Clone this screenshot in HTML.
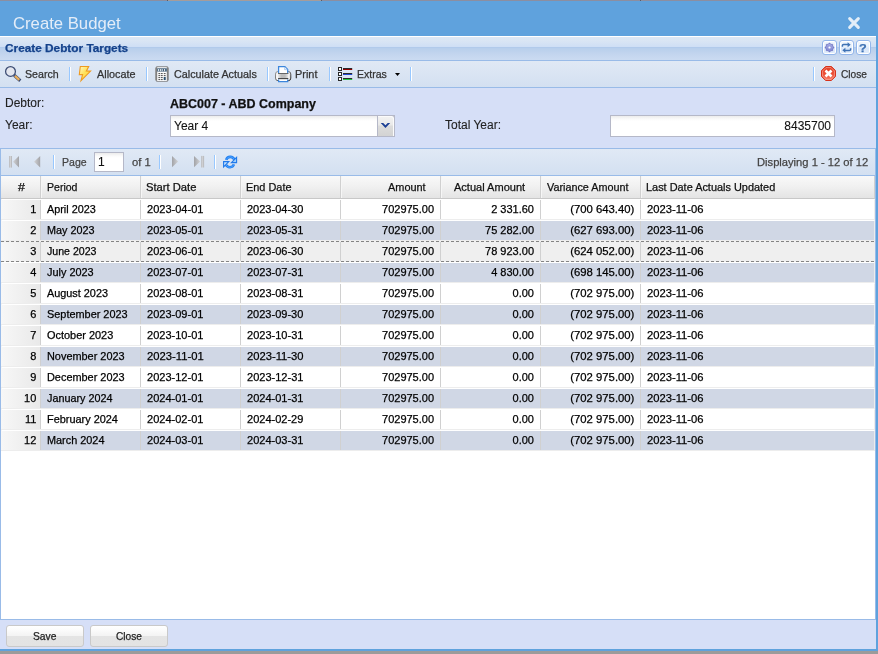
<!DOCTYPE html>
<html><head><meta charset="utf-8"><title>Create Budget</title>
<style>
*{box-sizing:border-box;margin:0;padding:0}
html,body{width:878px;height:654px;overflow:hidden;background:#fff}
body{font-family:"Liberation Sans",sans-serif;font-size:11px;color:#222;position:relative}
.abs{position:absolute}
.t{position:absolute;white-space:nowrap;transform-origin:0 0;-webkit-text-stroke:0.25px currentColor}
#win{left:0;top:0;width:878px;height:651px;background:#5fa2dd}
#topline{left:0;top:0;width:878px;height:1px;background:#8c8ea0}
#botshadow{left:0;top:651px;width:878px;height:3px;background:#9b9b9b}
#phdr{left:0;top:36px;width:876px;height:24px;border-top:1px solid #fff;
 background:linear-gradient(#dce7f5 0,#d9e5f4 4px,#cfdff5 9.5px,#adc7ea 10px,#b8cfec 11.5px,#c3d5ee 17px,#cbdbf1 23px)}
#tb{left:0;top:60px;width:876px;height:28px;border-top:1px solid #99bbe8;border-bottom:1px solid #99bbe8;
 background:linear-gradient(#e0e9f5,#d3e0f1)}
.sep{position:absolute;width:2px;height:14px;border-left:1px solid #98c8ff;border-right:1px solid #fff}
#form{left:0;top:88px;width:876px;height:60px;background:#d6dff7}
.fld{position:absolute;top:115px;height:22px;border:1px solid #b5b8c8;background:linear-gradient(#ececec 0,#fafafa 3px,#fff 5px)}
#pg{left:0;top:148px;width:876px;height:27px;border:1px solid #99bbe8;border-bottom:0;
 background:linear-gradient(#e0e9f5,#d3e0f1)}
#grid{left:0;top:175px;width:876px;height:445px;background:#fff;border:1px solid #99bbe8}
#ghdr{left:1px;top:176px;width:874px;height:23px;border-bottom:1px solid #c8c8c8;border-right:1px solid #d0d0d0;
 background:linear-gradient(#f9f9f9 0,#f1f1f1 10px,#e4e4e4 22px)}
.hs{position:absolute;top:176px;width:2px;height:22px;border-left:1px solid #d0d0d0;border-right:1px solid #f6f6f6}
.row{position:absolute;left:1px;width:874px;height:21px;border:1px solid #ededed;border-top-color:#fff;background:#fff}
.row.alt{background:#d0d7e5}
.row.over{background:#efefef;border-color:transparent}
.row.over:before,.row.over:after{content:"";position:absolute;left:-1px;width:874px;height:1px;top:-1px;
 background:repeating-linear-gradient(90deg,#848484 0,#848484 3px,transparent 3px,transparent 5px)}
.row.over:after{top:19px}
.num{position:absolute;left:-1px;top:0;bottom:0;width:39px;background:linear-gradient(90deg,#f7f7f7,#e9e9e9)}
.ln{position:absolute;left:0;top:0;right:0;bottom:0;background-repeat:no-repeat;background-size:1px 100%;background-image:linear-gradient(#d0d0d0,#d0d0d0),linear-gradient(#d0d0d0,#d0d0d0),linear-gradient(#d0d0d0,#d0d0d0),linear-gradient(#d0d0d0,#d0d0d0),linear-gradient(#d0d0d0,#d0d0d0),linear-gradient(#d0d0d0,#d0d0d0),linear-gradient(#d0d0d0,#d0d0d0);background-position:38px 0,138px 0,238px 0,338px 0,438px 0,538px 0,638px 0}
#foot{left:0;top:620px;width:876px;height:29px;background:#d6dff7}
.btn{position:absolute;top:625px;height:22px;width:78px;border:1px solid #c9c9c9;border-radius:3px;
 background:linear-gradient(#fff 0,#fbfbfb 4px,#f3f3f3 10px,#e4e4e4 10px,#e3e3e3 20px)}
.tool{position:absolute;top:40px;width:15px;height:15px;border:1px solid #93b6ea;border-radius:3px;box-shadow:inset 0 0 0 1px #fff;background:linear-gradient(#f2f7fe,#e8f1fc 6px,#d9e7fa 7px,#e0ecfb)}
</style></head><body>
<div class="abs" id="win"></div>
<div class="abs" id="topline"></div><div class="abs" style="left:167px;top:0;width:154px;height:1px;background:#a69c9a"></div><div class="abs" style="left:167px;top:0;width:1px;height:1px;background:#5c5c64"></div><div class="abs" style="left:321px;top:0;width:1px;height:1px;background:#5c5c64"></div><div class="abs" style="left:640px;top:0;width:1px;height:1px;background:#5c5c64"></div>
<div class="abs" id="botshadow"></div>
<svg class="abs" style="left:846px;top:15px" width="16" height="16" viewBox="0 0 16 16"><path d="M3.7 3.7 L12.3 12.3 M12.3 3.7 L3.7 12.3" stroke="#e4eef8" stroke-width="3.1" stroke-linecap="round" fill="none"/></svg>

<div class="abs" id="phdr"></div>
<div class="tool" style="left:822px"></div>
<div class="tool" style="left:839px"></div>
<div class="tool" style="left:856px"></div>
<div class="abs" id="tb"></div>
<div class="sep" style="left:69px;top:67px"></div>
<div class="sep" style="left:146px;top:67px"></div>
<div class="sep" style="left:267px;top:67px"></div>
<div class="sep" style="left:329px;top:67px"></div>
<div class="sep" style="left:410px;top:67px"></div>
<div class="sep" style="left:813px;top:67px"></div>
<svg width="0" height="0" style="position:absolute"><defs>
<linearGradient id="gBolt" x1="0" y1="0" x2="1" y2="1"><stop offset="0" stop-color="#fff9c8"/><stop offset=".45" stop-color="#ffe25a"/><stop offset="1" stop-color="#ffd23a"/></linearGradient>
<linearGradient id="gOct" x1="0" y1="0" x2="0" y2="1"><stop offset="0" stop-color="#e23c22"/><stop offset=".55" stop-color="#ec4f36"/><stop offset="1" stop-color="#f7806c"/></linearGradient>
<linearGradient id="gTri" x1="0" y1="0" x2="1" y2="0"><stop offset="0" stop-color="#d2d3d6"/><stop offset="1" stop-color="#a2a3a7"/></linearGradient>
<linearGradient id="gTriR" x1="0" y1="0" x2="1" y2="0"><stop offset="0" stop-color="#a2a3a7"/><stop offset="1" stop-color="#d2d3d6"/></linearGradient>
<linearGradient id="gBar" x1="0" y1="0" x2="1" y2="0"><stop offset="0" stop-color="#b8b9bc"/><stop offset=".5" stop-color="#d0d1d4"/><stop offset="1" stop-color="#b0b1b4"/></linearGradient>
<linearGradient id="gPrn" x1="0" y1="0" x2="1" y2="0"><stop offset="0" stop-color="#d0d0d0"/><stop offset=".08" stop-color="#fbfbfb"/><stop offset=".16" stop-color="#f4f4f4"/><stop offset=".24" stop-color="#d4d4d4"/><stop offset=".76" stop-color="#d4d4d4"/><stop offset=".84" stop-color="#f4f4f4"/><stop offset=".92" stop-color="#e8e8e8"/><stop offset="1" stop-color="#a0a0a0"/></linearGradient>
<linearGradient id="gPrnS" x1="0" y1="0" x2="1" y2="1"><stop offset="0" stop-color="#9a9a9a"/><stop offset=".5" stop-color="#6c6c6c"/><stop offset="1" stop-color="#262626"/></linearGradient>
<linearGradient id="gPrnP" x1="0" y1="0" x2="1" y2="0"><stop offset="0" stop-color="#e2e2e2"/><stop offset=".3" stop-color="#bcbcbc"/><stop offset=".7" stop-color="#bcbcbc"/><stop offset="1" stop-color="#e2e2e2"/></linearGradient>
<linearGradient id="gRef" x1="0" y1="0" x2="0" y2="1"><stop offset="0" stop-color="#1f7ff0"/><stop offset=".5" stop-color="#55a9ff"/><stop offset="1" stop-color="#1a72e0"/></linearGradient>
<linearGradient id="gGear" x1="0" y1="0" x2="0" y2="1"><stop offset="0" stop-color="#a9aee8"/><stop offset="1" stop-color="#7f85d0"/></linearGradient>
</defs></svg><svg class="abs" style="left:4px;top:65px" width="18" height="18" viewBox="0 0 18 18" ><circle cx="6.5" cy="6.4" r="4.9" fill="#e3e6ee" stroke="#3b4b72" stroke-width="1.25"/><path d="M10.2 10.2 L16.3 15.7" stroke="#3b4b72" stroke-width="3.2" stroke-linecap="butt"/><path d="M10.9 10.8 L15.3 14.8" stroke="#e9ae5c" stroke-width="2.3" stroke-linecap="butt"/></svg><svg class="abs" style="left:78px;top:65px" width="14" height="18" viewBox="0 0 14 18" ><path d="M2.3 1.5 L10.7 1.5 L8.4 5.9 L12.6 6.1 L3 15.7 L4.6 9.6 L1.3 9.6 Z" fill="url(#gBolt)" stroke="#ef9a20" stroke-width="1.1" stroke-linejoin="miter"/></svg><svg class="abs" style="left:155px;top:66px" width="14" height="16" viewBox="0 0 14 16" ><rect x="0.2" y="1.5" width="13.6" height="13" fill="#8a8a8a"/><rect x="1.3" y="0.3" width="11.4" height="15.4" fill="#7c7c7c"/><rect x="2.2" y="1.2" width="9.6" height="13.8" fill="#fff"/><rect x="2.2" y="2.3" width="9.6" height="3.3" fill="#3f5d78"/><path d="M3.6 3v2.2M5.4 3v2.2M7.2 3v2.2M9.6 3v2.2" stroke="#fff" stroke-width=".9"/><rect x="3.4" y="7.1" width="1.8" height="1" fill="#4a4a4a"/><rect x="3.4" y="9.1" width="1.8" height="1" fill="#4a4a4a"/><rect x="3.4" y="11.1" width="1.8" height="1" fill="#4a4a4a"/><rect x="3.4" y="13.1" width="1.8" height="1" fill="#4a4a4a"/><rect x="5.9" y="7.1" width="1.8" height="1" fill="#4a4a4a"/><rect x="5.9" y="9.1" width="1.8" height="1" fill="#4a4a4a"/><rect x="5.9" y="11.1" width="1.8" height="1" fill="#4a4a4a"/><rect x="5.9" y="13.1" width="1.8" height="1" fill="#4a4a4a"/><rect x="8.8" y="7.1" width="1.8" height="1" fill="#4a4a4a"/><rect x="8.8" y="9.1" width="1.8" height="1" fill="#4a4a4a"/><rect x="8.7" y="10.9" width="2" height="3.2" fill="#2b4f6d"/></svg><svg class="abs" style="left:275px;top:65px" width="17" height="18" viewBox="0 0 17 18" ><rect x="0.5" y="6.5" width="15.3" height="9.2" rx="2.6" fill="url(#gPrn)" stroke="url(#gPrnS)" stroke-width="1"/><path d="M3.6 8.2 V1.6 H9.9 L12.7 4.4 V8.2" fill="#fff" stroke="#3c86dc" stroke-width="1.25"/><path d="M9.6 1.9 L9.6 4.7 L12.4 4.7" fill="#e6eef9" stroke="#8ab6ea" stroke-width=".6"/><rect x="3" y="8" width="10.4" height="1" fill="#666"/><rect x="3.6" y="9" width="9.2" height="4" fill="url(#gPrnP)"/><rect x="3" y="13" width="10.4" height="1.2" rx=".5" fill="#484848"/><path d="M3.6 14.4 V16.7 H12.7 V14.4" fill="#fff" stroke="#3c86dc" stroke-width="1.25"/></svg><svg class="abs" style="left:338px;top:67px" width="15" height="14" viewBox="0 0 15 14" ><rect x="0.5" y="0.5" width="3" height="3" fill="#fff" stroke="#2a2a2a" stroke-width="1"/><rect x="0.5" y="5.5" width="3" height="3" fill="#fff" stroke="#2a2a2a" stroke-width="1"/><rect x="0.5" y="10.5" width="3" height="3" fill="#fff" stroke="#2a2a2a" stroke-width="1"/><rect x="5" y="1" width="9.2" height="1" fill="#2a2a2a"/><rect x="5" y="2" width="9.2" height="1" fill="#8e0000"/><rect x="5" y="6" width="9.2" height="1" fill="#2a2a2a"/><rect x="5" y="7" width="9.2" height="1" fill="#2046d0"/><rect x="5" y="11" width="9.2" height="1" fill="#2a2a2a"/><rect x="5" y="12" width="9.2" height="1" fill="#1fc43c"/></svg><svg class="abs" style="left:394px;top:72px" width="8" height="5" viewBox="0 0 8 5" ><path d="M1 1 H6 L3.5 4 Z" fill="#000"/></svg><svg class="abs" style="left:820px;top:65px" width="17" height="17" viewBox="0 0 17 17" ><path d="M5.6 1.5 H11.4 L15.5 5.6 V11.4 L11.4 15.5 H5.6 L1.5 11.4 V5.6 Z" fill="url(#gOct)" stroke="#d6311b" stroke-width="1"/><path d="M6 2.6 H11 L14.4 6 V11 L11 14.4 H6 L2.6 11 V6 Z" fill="none" stroke="#f7a898" stroke-width=".8" opacity=".85"/><path d="M5.5 5.5 L11.5 11.5 M11.5 5.5 L5.5 11.5" stroke="#fff" stroke-width="2.6"/></svg><svg class="abs" style="left:822px;top:40px" width="15" height="15" viewBox="0 0 15 15" ><polygon points="11.78,7.08 11.78,7.92 10.85,8.52 10.59,9.15 10.82,10.23 10.23,10.82 9.15,10.59 8.52,10.85 7.92,11.78 7.08,11.78 6.48,10.85 5.85,10.59 4.77,10.82 4.18,10.23 4.41,9.15 4.15,8.52 3.22,7.92 3.22,7.08 4.15,6.48 4.41,5.85 4.18,4.77 4.77,4.18 5.85,4.41 6.48,4.15 7.08,3.22 7.92,3.22 8.52,4.15 9.15,4.41 10.23,4.18 10.82,4.77 10.59,5.85 10.85,6.48" fill="url(#gGear)" stroke="#6368ba" stroke-width=".8" stroke-linejoin="round"/><circle cx="7.5" cy="7.5" r="1.7" fill="#c6caf0" stroke="#8187d2" stroke-width=".5"/><circle cx="7.5" cy="7.5" r="0.8" fill="#fff"/></svg><svg class="abs" style="left:839px;top:40px" width="15" height="15" viewBox="0 0 15 15" ><path d="M3.4 6.7 V5.6 Q3.4 4.6 4.6 4.6 H9.2" fill="none" stroke="#3f72b4" stroke-width="1.5"/><path d="M8.6 2.2 L11.7 4.7 L8.6 7.2 Z" fill="#3f72b4"/><path d="M11.6 8.3 V9.4 Q11.6 10.4 10.4 10.4 H5.8" fill="none" stroke="#3f72b4" stroke-width="1.5"/><path d="M6.4 7.8 L3.3 10.3 L6.4 12.8 Z" fill="#3f72b4"/></svg>
<div class="abs" id="form"></div>
<div class="fld" style="left:170px;width:225px"></div>
<div class="abs" style="left:377px;top:115px;width:18px;height:22px;border:1px solid #b5b8c8;border-radius:0 3px 0 0;box-shadow:inset -1px 1px 0 #fbfbfb;background:linear-gradient(#f3f3f3 0,#e9e9e9 9px,#dcdcdc 10px,#d3d3d3 20px)"></div>
<svg class="abs" style="left:380px;top:122px" width="11" height="7" viewBox="0 0 11 7"><path d="M0.7 1 L3.2 1 L5.45 3.3 L7.7 1 L10.2 1 L5.45 6 Z" fill="#1c3f94"/></svg>
<div class="fld" style="left:610px;width:225px"></div>
<div class="abs" id="pg"></div>
<div class="sep" style="left:53px;top:155px"></div>
<div class="sep" style="left:159px;top:155px"></div>
<div class="sep" style="left:214px;top:155px"></div>
<div class="abs" style="left:94px;top:152px;width:30px;height:20px;border:1px solid #b5b8c8;background:linear-gradient(#ececec 0,#fafafa 3px,#fff 5px)"></div>
<svg class="abs" style="left:8px;top:155px" width="13" height="14" viewBox="0 0 13 14" ><rect x="1" y="1" width="3" height="11.6" fill="url(#gBar)"/><path d="M5 6.8 L11 1.1 V12.5 Z" fill="url(#gTri)"/></svg><svg class="abs" style="left:33px;top:155px" width="9" height="14" viewBox="0 0 9 14" ><path d="M1 6.8 L7.2 1.1 V12.5 Z" fill="url(#gTri)"/></svg><svg class="abs" style="left:171px;top:155px" width="9" height="14" viewBox="0 0 9 14" ><path d="M7.2 6.6 L1 0.9 V12.3 Z" fill="url(#gTriR)"/></svg><svg class="abs" style="left:193px;top:155px" width="13" height="14" viewBox="0 0 13 14" ><rect x="8.1" y="0.9" width="3" height="11.6" fill="url(#gBar)"/><path d="M7.2 6.6 L1 0.9 V12.3 Z" fill="url(#gTriR)"/></svg><svg class="abs" style="left:222px;top:154px" width="16" height="16" viewBox="0 0 16 16" ><path d="M4.2 5.9 A4.3 4.3 0 0 1 12.3 5.6" fill="none" stroke="#1f7ef0" stroke-width="2.6"/><path d="M4.3 5.7 A4.2 4.2 0 0 1 12.2 5.4" fill="none" stroke="#4da2ff" stroke-width="1"/><path d="M14.6 3.4 V8.6 H9.4 Z" fill="#9ccfff" stroke="#2079ea" stroke-width="1.1" stroke-linejoin="miter"/><path d="M11.9 10.4 A4.3 4.3 0 0 1 4 10.8" fill="none" stroke="#1f7ef0" stroke-width="2.6"/><path d="M11.8 10.6 A4.2 4.2 0 0 1 4.1 11" fill="none" stroke="#4da2ff" stroke-width="1"/><path d="M1.6 12.8 V7.6 H6.8 Z" fill="#c4e2ff" stroke="#2079ea" stroke-width="1.1" stroke-linejoin="miter"/></svg>
<div class="abs" id="grid"></div>
<div class="abs" id="ghdr"></div>
<div class="row" style="top:199px"><div class="num"></div><div class="ln"></div></div>
<div class="row alt" style="top:220px"><div class="num"></div><div class="ln"></div></div>
<div class="row over" style="top:241px"><div class="num"></div><div class="ln"></div></div>
<div class="row alt" style="top:262px"><div class="num"></div><div class="ln"></div></div>
<div class="row" style="top:283px"><div class="num"></div><div class="ln"></div></div>
<div class="row alt" style="top:304px"><div class="num"></div><div class="ln"></div></div>
<div class="row" style="top:325px"><div class="num"></div><div class="ln"></div></div>
<div class="row alt" style="top:346px"><div class="num"></div><div class="ln"></div></div>
<div class="row" style="top:367px"><div class="num"></div><div class="ln"></div></div>
<div class="row alt" style="top:388px"><div class="num"></div><div class="ln"></div></div>
<div class="row" style="top:409px"><div class="num"></div><div class="ln"></div></div>
<div class="row alt" style="top:430px"><div class="num"></div><div class="ln"></div></div>
<div class="hs" style="left:40px"></div><div class="hs" style="left:140px"></div><div class="hs" style="left:240px"></div><div class="hs" style="left:340px"></div><div class="hs" style="left:440px"></div><div class="hs" style="left:540px"></div><div class="hs" style="left:640px"></div>

<div class="abs" id="foot"></div>
<div class="btn" style="left:6px"></div>
<div class="btn" style="left:90px"></div>
<div id="txt" style="position:absolute;left:0;top:0;width:878px;height:654px;will-change:transform">
<div class="t" id="t0" style="top:13.00px;font-size:17px;line-height:21px;color:#e4edf8;left:13.00px;transform:scaleX(0.9817);transform-origin:0 0;-webkit-text-stroke:0;">Create Budget</div>
<div class="t" id="t1" style="top:41.00px;font-size:11px;line-height:15px;color:#15428b;font-weight:bold;left:4.58px;transform:scaleX(1.0739);transform-origin:0 0;">Create Debtor Targets</div>
<div class="t" id="t2" style="top:67.00px;font-size:11px;line-height:15px;color:#333;left:25.01px;transform:scaleX(0.9648);transform-origin:0 0;">Search</div>
<div class="t" id="t3" style="top:67.00px;font-size:11px;line-height:15px;color:#333;left:96.84px;transform:scaleX(0.9857);transform-origin:0 0;">Allocate</div>
<div class="t" id="t4" style="top:67.00px;font-size:11px;line-height:15px;color:#333;left:173.94px;transform:scaleX(0.9814);transform-origin:0 0;">Calculate Actuals</div>
<div class="t" id="t5" style="top:67.00px;font-size:11px;line-height:15px;color:#333;left:294.91px;transform:scaleX(0.9941);transform-origin:0 0;">Print</div>
<div class="t" id="t6" style="top:67.00px;font-size:11px;line-height:15px;color:#333;left:356.94px;transform:scaleX(0.9576);transform-origin:0 0;">Extras</div>
<div class="t" id="t7" style="top:67.00px;font-size:11px;line-height:15px;color:#333;left:841.21px;transform:scaleX(0.9241);transform-origin:0 0;">Close</div>
<div class="t" id="t8" style="top:95.00px;font-size:12px;line-height:16px;color:#222;left:5px;-webkit-text-stroke:0.1px;">Debtor:</div>
<div class="t" id="t9" style="top:117.00px;font-size:12px;line-height:16px;color:#222;left:5px;-webkit-text-stroke:0.1px;">Year:</div>
<div class="t" id="t10" style="top:96.00px;font-size:12px;line-height:16px;color:#111;font-weight:bold;left:169.62px;transform:scaleX(1.0403);transform-origin:0 0;">ABC007 - ABD Company</div>
<div class="t" id="t11" style="top:118.00px;font-size:12px;line-height:16px;color:#111;left:174px;-webkit-text-stroke:0.1px;">Year 4</div>
<div class="t" id="t12" style="top:117.00px;font-size:12px;line-height:16px;color:#222;left:445px;-webkit-text-stroke:0.1px;">Total Year:</div>
<div class="t" id="t13" style="top:118.00px;font-size:12px;line-height:16px;color:#111;right:47.00px;-webkit-text-stroke:0.1px;">8435700</div>
<div class="t" id="t14" style="top:155.00px;font-size:11px;line-height:15px;color:#444;left:61.74px;transform:scaleX(0.9574);transform-origin:0 0;">Page</div>
<div class="t" id="t15" style="top:154.00px;font-size:12px;line-height:16px;color:#111;left:98px;-webkit-text-stroke:0.1px;">1</div>
<div class="t" id="t16" style="top:155.00px;font-size:11px;line-height:15px;color:#444;left:131.82px;transform:scaleX(1.0183);transform-origin:0 0;">of 1</div>
<div class="t" id="t17" style="top:155.00px;font-size:11px;line-height:15px;color:#444;left:757.27px;transform:scaleX(1.0153);transform-origin:0 0;">Displaying 1 - 12 of 12</div>
<div class="t" id="t18" style="top:180.00px;font-size:11px;line-height:15px;color:#111;left:18px;transform:scaleX(1.13);">#</div>
<div class="t" id="t19" style="top:180.00px;font-size:11px;line-height:15px;color:#111;left:47.14px;transform:scaleX(0.9574);transform-origin:0 0;">Period</div>
<div class="t" id="t20" style="top:180.00px;font-size:11px;line-height:15px;color:#111;left:146.37px;transform:scaleX(1.0173);transform-origin:0 0;">Start Date</div>
<div class="t" id="t21" style="top:180.00px;font-size:11px;line-height:15px;color:#111;left:246.30px;transform:scaleX(0.9926);transform-origin:0 0;">End Date</div>
<div class="t" id="t22" style="top:180.00px;font-size:11px;line-height:15px;color:#111;left:387.62px;transform:scaleX(0.9934);transform-origin:0 0;">Amount</div>
<div class="t" id="t23" style="top:180.00px;font-size:11px;line-height:15px;color:#111;left:453.83px;transform:scaleX(1.0024);transform-origin:0 0;">Actual Amount</div>
<div class="t" id="t24" style="top:180.00px;font-size:11px;line-height:15px;color:#111;left:547.46px;transform:scaleX(0.9832);transform-origin:0 0;">Variance Amount</div>
<div class="t" id="t25" style="top:180.00px;font-size:11px;line-height:15px;color:#111;left:646.30px;transform:scaleX(0.9919);transform-origin:0 0;">Last Date Actuals Updated</div>
<div class="t" id="t26" style="top:202.00px;font-size:11px;line-height:15px;color:#000;right:841.70px;">1</div>
<div class="t" id="t27" style="top:202.00px;font-size:11px;line-height:15px;color:#000;left:47.08px;transform:scaleX(0.9855);transform-origin:0 0;">April 2023</div>
<div class="t" id="t28" style="top:202.00px;font-size:11px;line-height:15px;color:#000;left:147px;transform:scaleX(1.0029);transform-origin:0 0;">2023-04-01</div>
<div class="t" id="t29" style="top:202.00px;font-size:11px;line-height:15px;color:#000;left:247px;transform:scaleX(1.0005);transform-origin:0 0;">2023-04-30</div>
<div class="t" id="t30" style="top:202.00px;font-size:11px;line-height:15px;color:#000;right:443.97px;">702975.00</div>
<div class="t" id="t31" style="top:202.00px;font-size:11px;line-height:15px;color:#000;right:344.00px;">2 331.60</div>
<div class="t" id="t32" style="top:202.00px;font-size:11px;line-height:15px;color:#000;right:243.25px;transform:scaleX(1.0291);transform-origin:100% 0;">(700 643.40)</div>
<div class="t" id="t33" style="top:202.00px;font-size:11px;line-height:15px;color:#000;left:647px;transform:scaleX(1.0195);transform-origin:0 0;">2023-11-06</div>
<div class="t" id="t34" style="top:223.00px;font-size:11px;line-height:15px;color:#000;right:841.70px;">2</div>
<div class="t" id="t35" style="top:223.00px;font-size:11px;line-height:15px;color:#000;left:47.08px;transform:scaleX(0.9833);transform-origin:0 0;">May 2023</div>
<div class="t" id="t36" style="top:223.00px;font-size:11px;line-height:15px;color:#000;left:147px;transform:scaleX(1.0029);transform-origin:0 0;">2023-05-01</div>
<div class="t" id="t37" style="top:223.00px;font-size:11px;line-height:15px;color:#000;left:247px;transform:scaleX(1.0029);transform-origin:0 0;">2023-05-31</div>
<div class="t" id="t38" style="top:223.00px;font-size:11px;line-height:15px;color:#000;right:443.97px;">702975.00</div>
<div class="t" id="t39" style="top:223.00px;font-size:11px;line-height:15px;color:#000;right:344.00px;">75 282.00</div>
<div class="t" id="t40" style="top:223.00px;font-size:11px;line-height:15px;color:#000;right:243.25px;transform:scaleX(1.0291);transform-origin:100% 0;">(627 693.00)</div>
<div class="t" id="t41" style="top:223.00px;font-size:11px;line-height:15px;color:#000;left:647px;transform:scaleX(1.0195);transform-origin:0 0;">2023-11-06</div>
<div class="t" id="t42" style="top:244.00px;font-size:11px;line-height:15px;color:#000;right:841.70px;">3</div>
<div class="t" id="t43" style="top:244.00px;font-size:11px;line-height:15px;color:#000;left:47.08px;transform:scaleX(0.9634);transform-origin:0 0;">June 2023</div>
<div class="t" id="t44" style="top:244.00px;font-size:11px;line-height:15px;color:#000;left:147px;transform:scaleX(1.0029);transform-origin:0 0;">2023-06-01</div>
<div class="t" id="t45" style="top:244.00px;font-size:11px;line-height:15px;color:#000;left:247px;transform:scaleX(1.0005);transform-origin:0 0;">2023-06-30</div>
<div class="t" id="t46" style="top:244.00px;font-size:11px;line-height:15px;color:#000;right:443.97px;">702975.00</div>
<div class="t" id="t47" style="top:244.00px;font-size:11px;line-height:15px;color:#000;right:344.00px;">78 923.00</div>
<div class="t" id="t48" style="top:244.00px;font-size:11px;line-height:15px;color:#000;right:243.25px;transform:scaleX(1.0291);transform-origin:100% 0;">(624 052.00)</div>
<div class="t" id="t49" style="top:244.00px;font-size:11px;line-height:15px;color:#000;left:647px;transform:scaleX(1.0195);transform-origin:0 0;">2023-11-06</div>
<div class="t" id="t50" style="top:265.00px;font-size:11px;line-height:15px;color:#000;right:841.70px;">4</div>
<div class="t" id="t51" style="top:265.00px;font-size:11px;line-height:15px;color:#000;left:47.08px;transform:scaleX(0.9905);transform-origin:0 0;">July 2023</div>
<div class="t" id="t52" style="top:265.00px;font-size:11px;line-height:15px;color:#000;left:147px;transform:scaleX(1.0029);transform-origin:0 0;">2023-07-01</div>
<div class="t" id="t53" style="top:265.00px;font-size:11px;line-height:15px;color:#000;left:247px;transform:scaleX(1.0029);transform-origin:0 0;">2023-07-31</div>
<div class="t" id="t54" style="top:265.00px;font-size:11px;line-height:15px;color:#000;right:443.97px;">702975.00</div>
<div class="t" id="t55" style="top:265.00px;font-size:11px;line-height:15px;color:#000;right:344.00px;">4 830.00</div>
<div class="t" id="t56" style="top:265.00px;font-size:11px;line-height:15px;color:#000;right:243.25px;transform:scaleX(1.0291);transform-origin:100% 0;">(698 145.00)</div>
<div class="t" id="t57" style="top:265.00px;font-size:11px;line-height:15px;color:#000;left:647px;transform:scaleX(1.0195);transform-origin:0 0;">2023-11-06</div>
<div class="t" id="t58" style="top:286.00px;font-size:11px;line-height:15px;color:#000;right:841.70px;">5</div>
<div class="t" id="t59" style="top:286.00px;font-size:11px;line-height:15px;color:#000;left:47.08px;transform:scaleX(0.9871);transform-origin:0 0;">August 2023</div>
<div class="t" id="t60" style="top:286.00px;font-size:11px;line-height:15px;color:#000;left:147px;transform:scaleX(1.0029);transform-origin:0 0;">2023-08-01</div>
<div class="t" id="t61" style="top:286.00px;font-size:11px;line-height:15px;color:#000;left:247px;transform:scaleX(1.0029);transform-origin:0 0;">2023-08-31</div>
<div class="t" id="t62" style="top:286.00px;font-size:11px;line-height:15px;color:#000;right:443.97px;">702975.00</div>
<div class="t" id="t63" style="top:286.00px;font-size:11px;line-height:15px;color:#000;right:344.00px;">0.00</div>
<div class="t" id="t64" style="top:286.00px;font-size:11px;line-height:15px;color:#000;right:243.25px;transform:scaleX(1.0290);transform-origin:100% 0;">(702 975.00)</div>
<div class="t" id="t65" style="top:286.00px;font-size:11px;line-height:15px;color:#000;left:647px;transform:scaleX(1.0195);transform-origin:0 0;">2023-11-06</div>
<div class="t" id="t66" style="top:307.00px;font-size:11px;line-height:15px;color:#000;right:841.70px;">6</div>
<div class="t" id="t67" style="top:307.00px;font-size:11px;line-height:15px;color:#000;left:47.08px;transform:scaleX(0.9913);transform-origin:0 0;">September 2023</div>
<div class="t" id="t68" style="top:307.00px;font-size:11px;line-height:15px;color:#000;left:147px;transform:scaleX(1.0029);transform-origin:0 0;">2023-09-01</div>
<div class="t" id="t69" style="top:307.00px;font-size:11px;line-height:15px;color:#000;left:247px;transform:scaleX(1.0005);transform-origin:0 0;">2023-09-30</div>
<div class="t" id="t70" style="top:307.00px;font-size:11px;line-height:15px;color:#000;right:443.97px;">702975.00</div>
<div class="t" id="t71" style="top:307.00px;font-size:11px;line-height:15px;color:#000;right:344.00px;">0.00</div>
<div class="t" id="t72" style="top:307.00px;font-size:11px;line-height:15px;color:#000;right:243.25px;transform:scaleX(1.0290);transform-origin:100% 0;">(702 975.00)</div>
<div class="t" id="t73" style="top:307.00px;font-size:11px;line-height:15px;color:#000;left:647px;transform:scaleX(1.0195);transform-origin:0 0;">2023-11-06</div>
<div class="t" id="t74" style="top:328.00px;font-size:11px;line-height:15px;color:#000;right:841.70px;">7</div>
<div class="t" id="t75" style="top:328.00px;font-size:11px;line-height:15px;color:#000;left:47.08px;transform:scaleX(0.9944);transform-origin:0 0;">October 2023</div>
<div class="t" id="t76" style="top:328.00px;font-size:11px;line-height:15px;color:#000;left:147px;transform:scaleX(1.0029);transform-origin:0 0;">2023-10-01</div>
<div class="t" id="t77" style="top:328.00px;font-size:11px;line-height:15px;color:#000;left:247px;transform:scaleX(1.0029);transform-origin:0 0;">2023-10-31</div>
<div class="t" id="t78" style="top:328.00px;font-size:11px;line-height:15px;color:#000;right:443.97px;">702975.00</div>
<div class="t" id="t79" style="top:328.00px;font-size:11px;line-height:15px;color:#000;right:344.00px;">0.00</div>
<div class="t" id="t80" style="top:328.00px;font-size:11px;line-height:15px;color:#000;right:243.25px;transform:scaleX(1.0290);transform-origin:100% 0;">(702 975.00)</div>
<div class="t" id="t81" style="top:328.00px;font-size:11px;line-height:15px;color:#000;left:647px;transform:scaleX(1.0195);transform-origin:0 0;">2023-11-06</div>
<div class="t" id="t82" style="top:349.00px;font-size:11px;line-height:15px;color:#000;right:841.70px;">8</div>
<div class="t" id="t83" style="top:349.00px;font-size:11px;line-height:15px;color:#000;left:47.08px;transform:scaleX(0.9911);transform-origin:0 0;">November 2023</div>
<div class="t" id="t84" style="top:349.00px;font-size:11px;line-height:15px;color:#000;left:147px;transform:scaleX(1.0213);transform-origin:0 0;">2023-11-01</div>
<div class="t" id="t85" style="top:349.00px;font-size:11px;line-height:15px;color:#000;left:247px;transform:scaleX(1.0189);transform-origin:0 0;">2023-11-30</div>
<div class="t" id="t86" style="top:349.00px;font-size:11px;line-height:15px;color:#000;right:443.97px;">702975.00</div>
<div class="t" id="t87" style="top:349.00px;font-size:11px;line-height:15px;color:#000;right:344.00px;">0.00</div>
<div class="t" id="t88" style="top:349.00px;font-size:11px;line-height:15px;color:#000;right:243.25px;transform:scaleX(1.0290);transform-origin:100% 0;">(702 975.00)</div>
<div class="t" id="t89" style="top:349.00px;font-size:11px;line-height:15px;color:#000;left:647px;transform:scaleX(1.0195);transform-origin:0 0;">2023-11-06</div>
<div class="t" id="t90" style="top:370.00px;font-size:11px;line-height:15px;color:#000;right:841.70px;">9</div>
<div class="t" id="t91" style="top:370.00px;font-size:11px;line-height:15px;color:#000;left:47.08px;transform:scaleX(0.9911);transform-origin:0 0;">December 2023</div>
<div class="t" id="t92" style="top:370.00px;font-size:11px;line-height:15px;color:#000;left:147px;transform:scaleX(1.0029);transform-origin:0 0;">2023-12-01</div>
<div class="t" id="t93" style="top:370.00px;font-size:11px;line-height:15px;color:#000;left:247px;transform:scaleX(1.0029);transform-origin:0 0;">2023-12-31</div>
<div class="t" id="t94" style="top:370.00px;font-size:11px;line-height:15px;color:#000;right:443.97px;">702975.00</div>
<div class="t" id="t95" style="top:370.00px;font-size:11px;line-height:15px;color:#000;right:344.00px;">0.00</div>
<div class="t" id="t96" style="top:370.00px;font-size:11px;line-height:15px;color:#000;right:243.25px;transform:scaleX(1.0290);transform-origin:100% 0;">(702 975.00)</div>
<div class="t" id="t97" style="top:370.00px;font-size:11px;line-height:15px;color:#000;left:647px;transform:scaleX(1.0195);transform-origin:0 0;">2023-11-06</div>
<div class="t" id="t98" style="top:391.00px;font-size:11px;line-height:15px;color:#000;right:841.70px;">10</div>
<div class="t" id="t99" style="top:391.00px;font-size:11px;line-height:15px;color:#000;left:47.08px;transform:scaleX(0.9816);transform-origin:0 0;">January 2024</div>
<div class="t" id="t100" style="top:391.00px;font-size:11px;line-height:15px;color:#000;left:147px;transform:scaleX(1.0029);transform-origin:0 0;">2024-01-01</div>
<div class="t" id="t101" style="top:391.00px;font-size:11px;line-height:15px;color:#000;left:247px;transform:scaleX(1.0029);transform-origin:0 0;">2024-01-31</div>
<div class="t" id="t102" style="top:391.00px;font-size:11px;line-height:15px;color:#000;right:443.97px;">702975.00</div>
<div class="t" id="t103" style="top:391.00px;font-size:11px;line-height:15px;color:#000;right:344.00px;">0.00</div>
<div class="t" id="t104" style="top:391.00px;font-size:11px;line-height:15px;color:#000;right:243.25px;transform:scaleX(1.0290);transform-origin:100% 0;">(702 975.00)</div>
<div class="t" id="t105" style="top:391.00px;font-size:11px;line-height:15px;color:#000;left:647px;transform:scaleX(1.0195);transform-origin:0 0;">2023-11-06</div>
<div class="t" id="t106" style="top:412.00px;font-size:11px;line-height:15px;color:#000;right:841.70px;">11</div>
<div class="t" id="t107" style="top:412.00px;font-size:11px;line-height:15px;color:#000;left:47.08px;transform:scaleX(0.9908);transform-origin:0 0;">February 2024</div>
<div class="t" id="t108" style="top:412.00px;font-size:11px;line-height:15px;color:#000;left:147px;transform:scaleX(1.0029);transform-origin:0 0;">2024-02-01</div>
<div class="t" id="t109" style="top:412.00px;font-size:11px;line-height:15px;color:#000;left:247px;transform:scaleX(1.0016);transform-origin:0 0;">2024-02-29</div>
<div class="t" id="t110" style="top:412.00px;font-size:11px;line-height:15px;color:#000;right:443.97px;">702975.00</div>
<div class="t" id="t111" style="top:412.00px;font-size:11px;line-height:15px;color:#000;right:344.00px;">0.00</div>
<div class="t" id="t112" style="top:412.00px;font-size:11px;line-height:15px;color:#000;right:243.25px;transform:scaleX(1.0290);transform-origin:100% 0;">(702 975.00)</div>
<div class="t" id="t113" style="top:412.00px;font-size:11px;line-height:15px;color:#000;left:647px;transform:scaleX(1.0195);transform-origin:0 0;">2023-11-06</div>
<div class="t" id="t114" style="top:433.00px;font-size:11px;line-height:15px;color:#000;right:841.70px;">12</div>
<div class="t" id="t115" style="top:433.00px;font-size:11px;line-height:15px;color:#000;left:47.08px;transform:scaleX(0.9893);transform-origin:0 0;">March 2024</div>
<div class="t" id="t116" style="top:433.00px;font-size:11px;line-height:15px;color:#000;left:147px;transform:scaleX(1.0029);transform-origin:0 0;">2024-03-01</div>
<div class="t" id="t117" style="top:433.00px;font-size:11px;line-height:15px;color:#000;left:247px;transform:scaleX(1.0029);transform-origin:0 0;">2024-03-31</div>
<div class="t" id="t118" style="top:433.00px;font-size:11px;line-height:15px;color:#000;right:443.97px;">702975.00</div>
<div class="t" id="t119" style="top:433.00px;font-size:11px;line-height:15px;color:#000;right:344.00px;">0.00</div>
<div class="t" id="t120" style="top:433.00px;font-size:11px;line-height:15px;color:#000;right:243.25px;transform:scaleX(1.0290);transform-origin:100% 0;">(702 975.00)</div>
<div class="t" id="t121" style="top:433.00px;font-size:11px;line-height:15px;color:#000;left:647px;transform:scaleX(1.0195);transform-origin:0 0;">2023-11-06</div>
<div class="t" id="t122" style="top:629.00px;font-size:11px;line-height:15px;color:#222;left:33.03px;transform:scaleX(0.9347);transform-origin:0 0;">Save</div>
<div class="t" id="t123" style="top:629.00px;font-size:11px;line-height:15px;color:#222;left:116.41px;transform:scaleX(0.9228);transform-origin:0 0;">Close</div>
<div class="t" id="t124" style="top:40.60px;font-size:11px;line-height:15px;color:#3f72b4;font-weight:bold;left:859.14px;transform:scaleX(1.1511);transform-origin:0 0;">?</div>
</div>
</body></html>
